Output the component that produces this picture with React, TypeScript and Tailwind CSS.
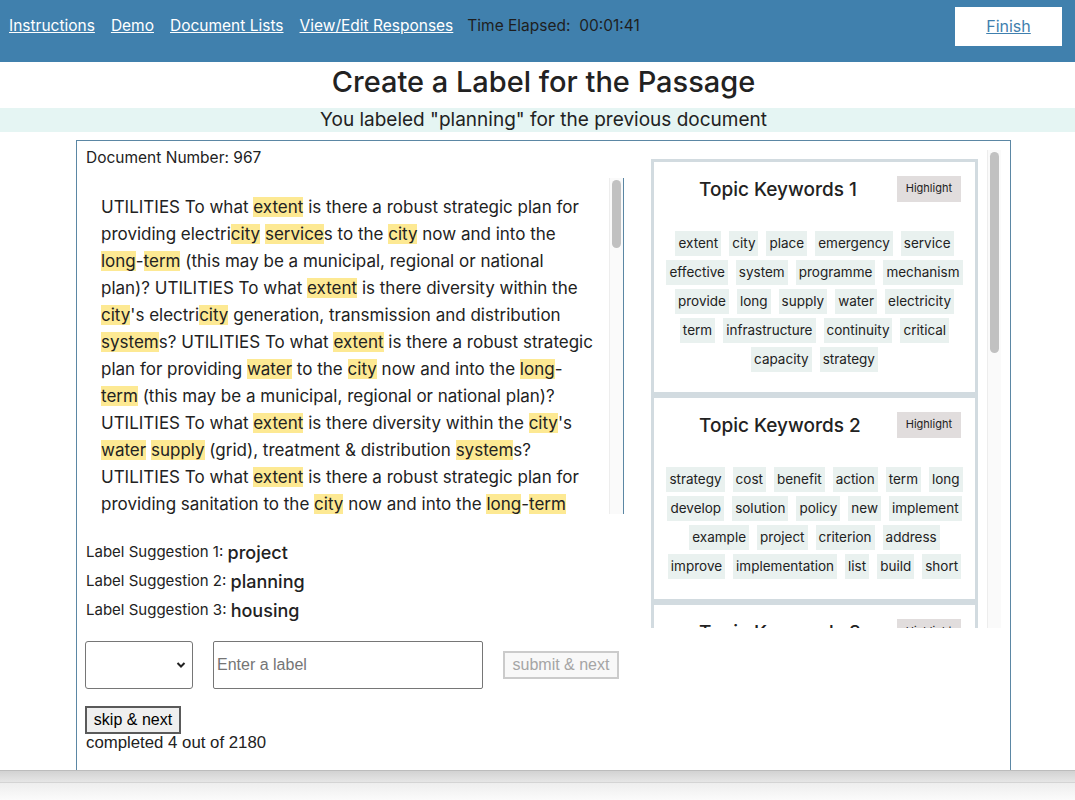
import React from "react";

const passage =
  "UTILITIES To what {extent} is there a robust strategic plan for providing electri{city} {service}s to the {city} now and into the {long}-{term} (this may be a municipal, regional or national plan)? UTILITIES To what {extent} is there diversity within the {city}'s electri{city} generation, transmission and distribution {system}s? UTILITIES To what {extent} is there a robust strategic plan for providing {water} to the {city} now and into the {long}-{term} (this may be a municipal, regional or national plan)? UTILITIES To what {extent} is there diversity within the {city}'s {water} {supply} (grid), treatment & distribution {system}s? UTILITIES To what {extent} is there a robust strategic plan for providing sanitation to the {city} now and into the {long}-{term} (this may be a municipal, regional or national plan)? UTILITIES To what {extent} is there diversity within the {city}'s sanitation and wastewater treatment {system}s? UTILITIES To what {extent} is there a robust strategic plan for providing solid waste management {service}s to the {city} now and into the {long}-{term} (this may be a municipal, regional or national plan)? UTILITIES To what {extent} is there diversity within the {city}'s solid waste collection and disposal {system}s? UTILITIES To what {extent} is there a robust strategic plan for providing gas {service}s to the {city} now and into the {long}-{term} (this may be a municipal, regional or national plan)?";

const topics: string[][] = [
  ["extent", "city", "place", "emergency", "service", "effective", "system", "programme", "mechanism", "provide", "long", "supply", "water", "electricity", "term", "infrastructure", "continuity", "critical", "capacity", "strategy"],
  ["strategy", "cost", "benefit", "action", "term", "long", "develop", "solution", "policy", "new", "implement", "example", "project", "criterion", "address", "improve", "implementation", "list", "build", "short"],
  ["housing", "plan", "land", "development", "area", "urban", "settlement", "informal", "planning", "use", "growth", "provide", "resident", "access", "public", "population", "zone", "management", "community", "density"],
  ["risk", "disaster", "assessment", "hazard", "climate", "change", "impact", "flood", "response", "vulnerability", "event", "information", "early", "warning", "data", "emergency", "exposure", "recovery", "analysis", "level"],
  ["health", "social", "public", "community", "service", "school", "education", "care", "support", "access", "facility", "safety", "population", "vulnerable", "group", "program", "resident", "staff", "local", "network"],
];

function Passage() {
  const parts = passage.split(/\{([^}]+)\}/);
  return (
    <>
      {parts.map((p, i) =>
        i % 2 === 1 ? (
          <span key={i} className="bg-[#fde993]">
            {p}
          </span>
        ) : (
          <React.Fragment key={i}>{p}</React.Fragment>
        )
      )}
    </>
  );
}

// drawn scroll track, the page is a static snapshot
function ScrollTrack({ top, height }: { top: string; height: string }) {
  return (
    <div className="flex w-[14px] shrink-0 flex-col border-l border-[#ededed] bg-[#fafafa] px-[2px]">
      <div className={`${top} ${height} rounded-full bg-[#c1c1c1]`} />
    </div>
  );
}

function TopicCard({ n, words }: { n: number; words: string[] }) {
  return (
    <div className="border-[3px] border-[#d2dbe0] bg-white pb-[20px] pt-[13px]">
      <div className="flex h-[27px] items-center justify-between pl-[45px] pr-[14px]">
        <span className="pt-[3px] text-[19px] font-medium text-[#222]">Topic Keywords {n}</span>
        <button className="h-[26px] bg-[#e1dddd] px-[9px] text-[11px] text-[#222]">Highlight</button>
      </div>
      <div className="mt-[29px] flex flex-wrap justify-center gap-x-[8px] gap-y-[4px] px-[10px]">
        {words.map((w, i) => (
          <span key={i} className="h-[25px] bg-[#e9f1ef] px-[3px] text-[13.5px] leading-[25px] text-[#222]">
            {w}
          </span>
        ))}
      </div>
    </div>
  );
}

export default function App() {
  return (
    <div className="h-[800px] w-[1075px] overflow-hidden bg-white font-['Inter','Noto_Sans',sans-serif] text-[#222]">
      {/* Top bar */}
      <div className="h-[62px] bg-[#4080ad] pl-[9px] pr-[13px] pt-[6px]">
        <div className="flex h-[40px] items-center text-[15.5px]">
          <a className="text-white underline">Instructions</a>
          <a className="ml-[16px] text-white underline">Demo</a>
          <a className="ml-[16px] text-white underline">Document Lists</a>
          <a className="ml-[16px] text-white underline">View/Edit Responses</a>
          <span className="ml-[14px] whitespace-pre text-[#1e1e1e]">Time Elapsed:  00:01:41</span>
          <button className="ml-auto h-[39px] w-[107px] bg-white text-[16px] text-[#3f7fae] underline">Finish</button>
        </div>
      </div>

      <h1 className="flex h-[46px] items-center justify-center pb-[6px] pl-[12px] text-[29px] font-medium">
        Create a Label for the Passage
      </h1>
      <div className="flex h-[24px] items-center justify-center bg-[#e5f5f3] pl-[12px] text-[19px]">
        You labeled "planning" for the previous document
      </div>

      {/* Main box */}
      <div className="ml-[76px] mt-[8px] flex h-[630px] w-[935px] border-x border-t border-[#5b87a4] pl-[9px] pt-[9px]">
        <div className="w-[538px]">
          <div className="text-[15.5px] leading-[16px]">Document Number: 967</div>
          <div className="mt-[12px] flex h-[336px] border-r border-[#5b87a4]">
            <div className="flex-1 overflow-hidden pl-[15px] pr-[14px] pt-[16px] text-[17px] leading-[27px]">
              <Passage />
            </div>
            <ScrollTrack top="mt-[2px]" height="h-[68px]" />
          </div>

          <div className="mt-[24px] flex flex-col">
            {["project", "planning", "housing"].map((s, i) => (
              <div key={i} className="flex h-[29px] items-center">
                <span className="text-[15px]">Label Suggestion {i + 1}:&nbsp;</span>
                <span className="text-[18px] font-medium">{s}</span>
              </div>
            ))}
          </div>

          <div className="mt-[16px] flex items-center font-['Liberation_Sans',Arial,sans-serif]">
            <div className="relative -ml-[1px] h-[48px] w-[108px]">
              <select className="h-full w-full appearance-none rounded-[3px] border border-[#767676] bg-white" />
              <svg
                className="pointer-events-none absolute right-[7px] top-[20px]"
                width="10"
                height="8"
                viewBox="0 0 10 8"
              >
                <path d="M1.5 2 L5 5.5 L8.5 2" fill="none" stroke="#222" strokeWidth="2" />
              </svg>
            </div>
            <input
              placeholder="Enter a label"
              className="ml-[20px] h-[48px] w-[270px] rounded-[2px] border border-[#767676] px-[3px] text-[16px] placeholder:text-[#757575]"
            />
            <button
              disabled
              className="ml-[20px] h-[28px] w-[116px] border-2 border-[#cbcbcb] bg-[#f8f8f8] text-[16px] text-[#a5a5a5]"
            >
              submit &amp; next
            </button>
          </div>

          <div className="font-['Liberation_Sans',Arial,sans-serif]">
            <button className="-ml-[1px] mt-[17px] h-[28px] w-[96px] border-2 border-[#5a5a5a] bg-[#efefef] text-[16px] text-black">
              skip &amp; next
            </button>
            <div className="text-[16.8px] leading-[18px]">completed 4 out of 2180</div>
          </div>
        </div>

        <div className="ml-[27px] flex h-[478px] w-[350px]">
          <div className="flex-1 overflow-hidden pr-[9px] pt-[9px]">
            {topics.map((t, i) => (
              <TopicCard key={i} n={i + 1} words={t} />
            ))}
          </div>
          <ScrollTrack top="mt-[2px]" height="h-[201px]" />
        </div>
      </div>

      {/* window bottom edge */}
      <div className="h-[12px] border-t border-[#bcbcbc] bg-gradient-to-b from-[#d2d2d2] to-[#e6e6e6]" />
      <div className="h-[18px] border-t border-[#d4d4d4] bg-gradient-to-b from-[#eeeeee] to-[#fbfbfb]" />
    </div>
  );
}
